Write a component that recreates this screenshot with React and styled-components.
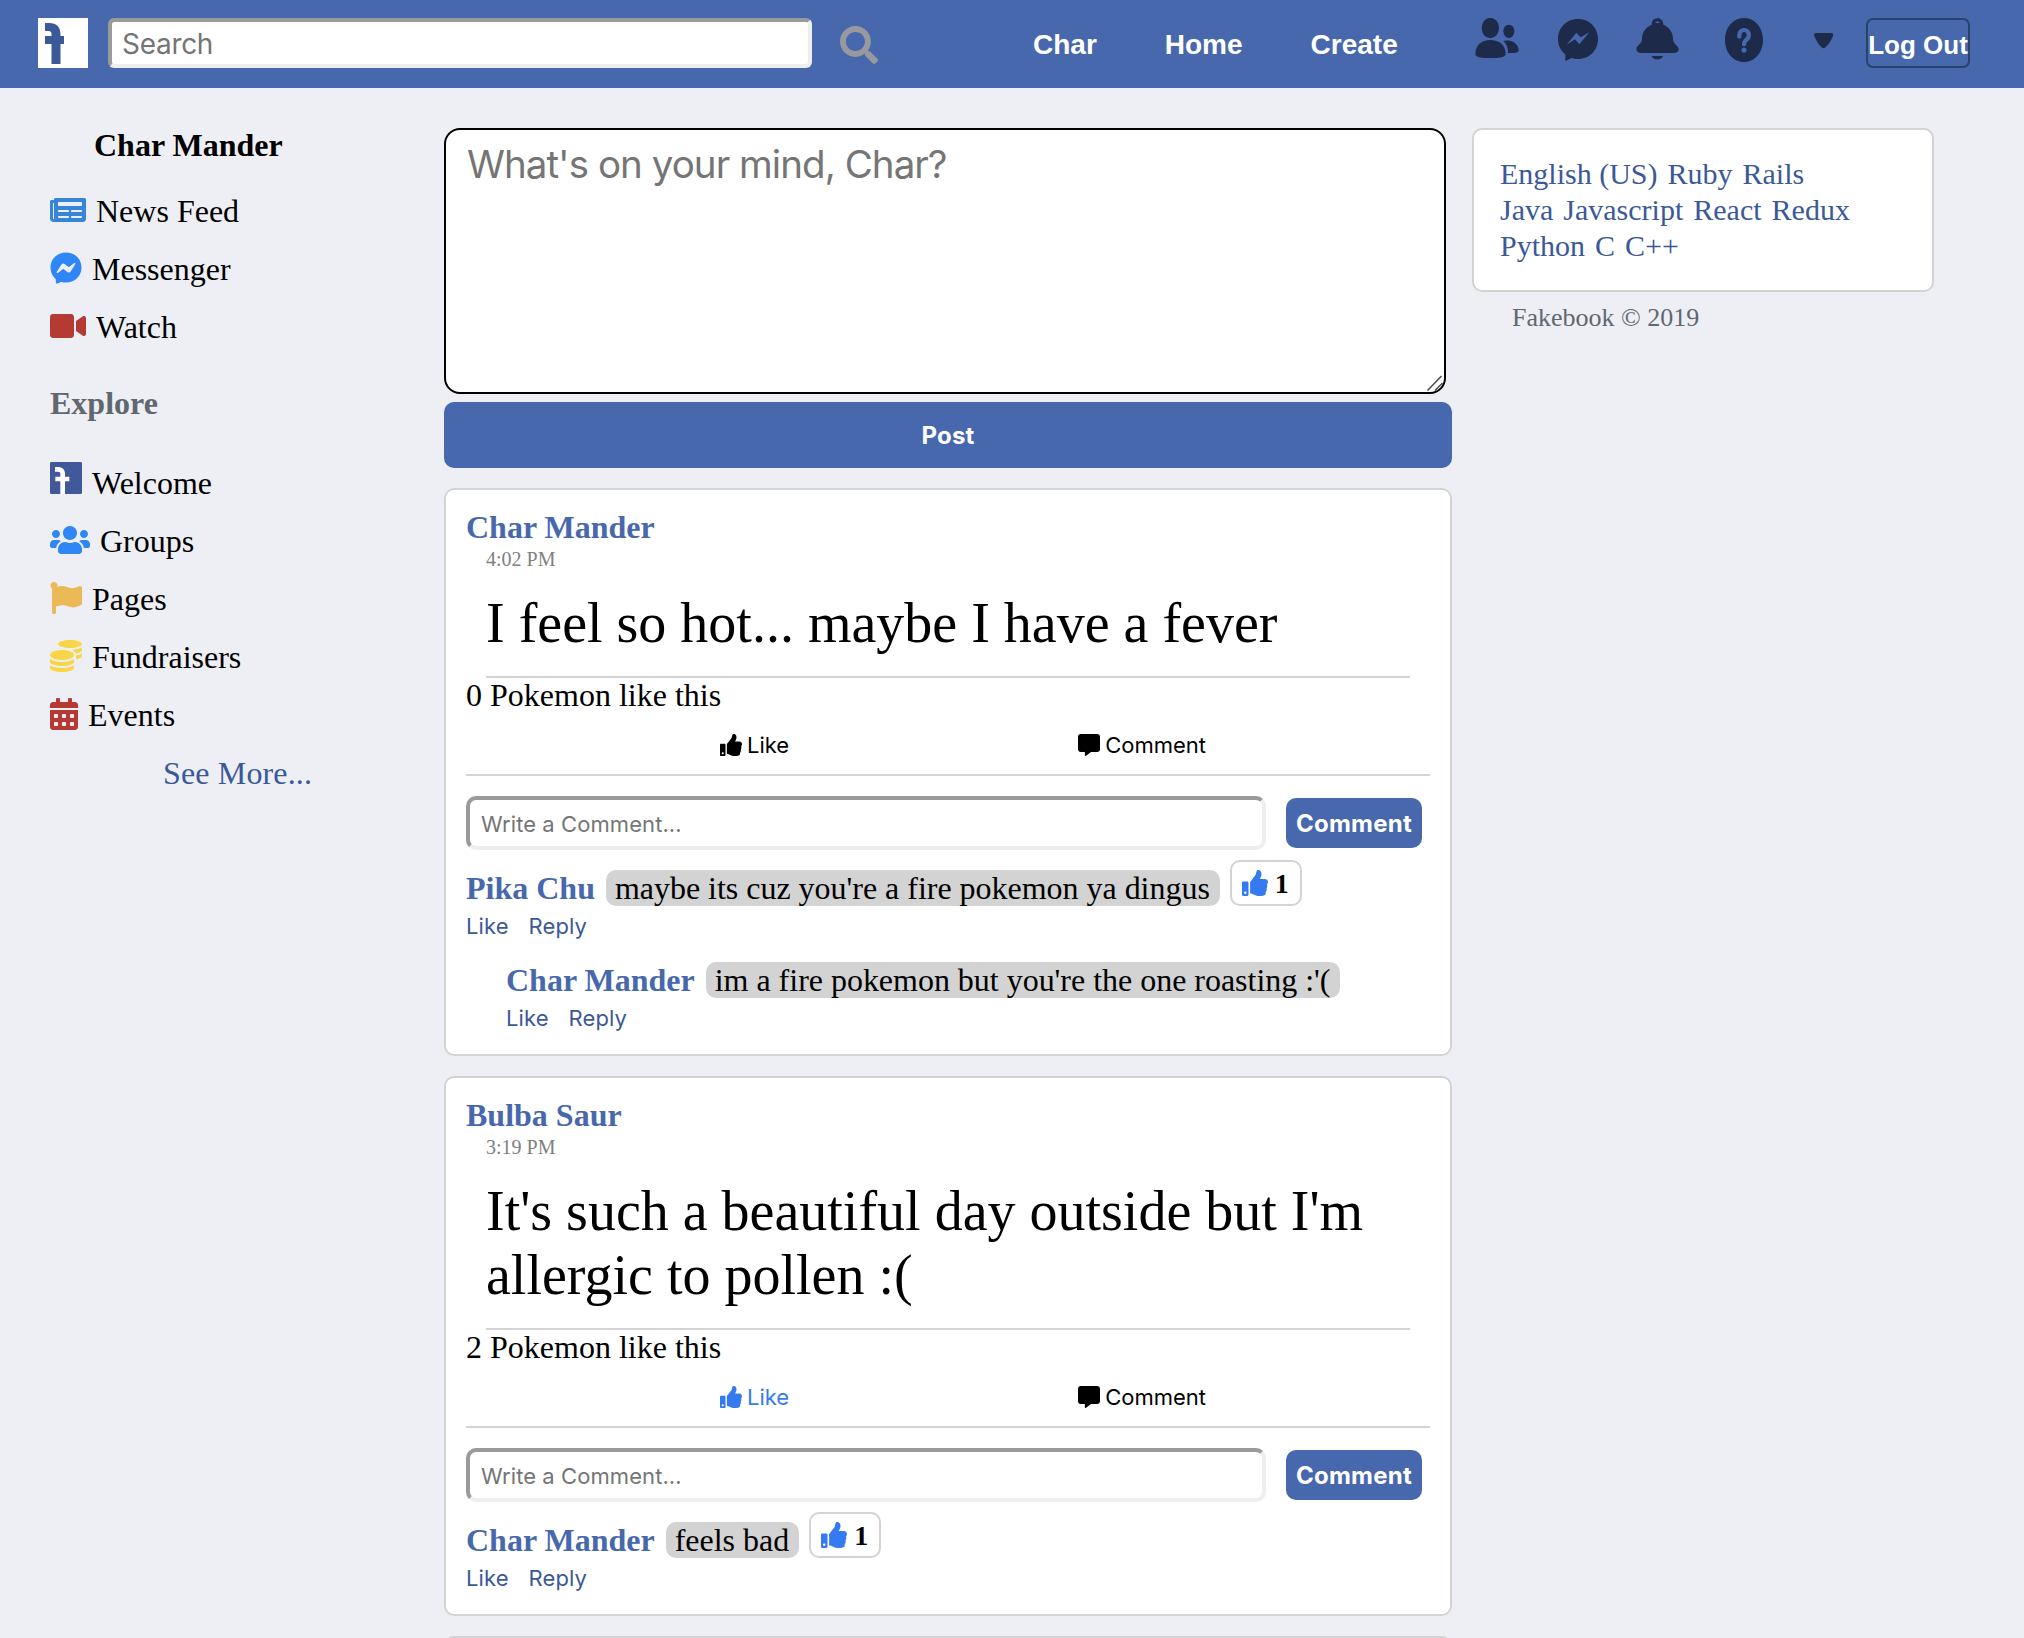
import React from "react";
import styled, { createGlobalStyle, css } from "styled-components";
import {
  FaCalendarAlt,
  FaCoins,
  FaCommentAlt,
  FaFacebookMessenger,
  FaFlag,
  FaNewspaper,
  FaSearch,
  FaThumbsUp,
  FaUsers,
  FaVideo,
} from "react-icons/fa";

const blue = "#4768ad";
const link = "#3b5998";
const line = "#d3d3d3";
const muted = "#606770";
const ui = `Inter, "Liberation Sans", sans-serif`;

const GlobalStyle = createGlobalStyle`
  *, *::before, *::after { box-sizing: border-box; }
  html, body { margin: 0; padding: 0; }
  body {
    height: 1638px;
    overflow: hidden;
    background: #eeeff5;
    color: #000;
    font-family: "Liberation Serif", serif;
    font-size: 32px;
    line-height: 36px;
  }
  ul { list-style: none; margin: 0; padding: 0; }
  button { font: inherit; cursor: pointer; }
  svg { display: block; flex: none; }
`;

/* ---------- header ---------- */

const Header = styled.header`
  display: flex;
  align-items: flex-start;
  height: 88px;
  padding: 18px 54px 0 38px;
  background: ${blue};
`;

const insetField = css`
  border: 4px solid;
  border-color: #9a9a9a #eeeeee #eeeeee #9a9a9a;
  background: #fff;
  font-family: ${ui};
  outline: none;
  &::placeholder {
    color: #757575;
    opacity: 1;
  }
`;

const SearchInput = styled.input`
  ${insetField}
  width: 704px;
  height: 50px;
  margin-left: 20px;
  padding: 2px 10px 0 10px;
  border-radius: 6px;
  font-size: 28px;
  letter-spacing: -0.3px;
`;

const SearchButton = styled.span`
  margin: 8px 0 0 28px;
  color: #97999f;
  font-size: 38px;
`;

const Nav = styled.nav`
  display: flex;
  gap: 68px;
  width: 442px;
  margin: 11px 0 0 155px;
`;

const NavLink = styled.a`
  color: #fff;
  font: bold 28px/32px "Liberation Sans", Arial, sans-serif;
`;

const HeaderIcons = styled.div`
  display: flex;
  align-items: flex-start;
  width: 359px;
  height: 50px;
  color: #1d2a49;
`;

const IconSlot = styled.span`
  padding-top: ${(p) => p.$top || 0}px;
  margin-left: ${(p) => p.$gap || 0}px;
`;

const LogOut = styled.button`
  width: 104px;
  height: 50px;
  margin-left: 32px;
  padding: 4px 0 0;
  border: 2px solid #27456b;
  border-radius: 7px;
  background: transparent;
  color: #fff;
  font: bold 26px/30px "Liberation Sans", Arial, sans-serif;
  white-space: nowrap;
`;

/* Each header glyph is drawn on a grid three times its size on screen. */
const Glyph = ({ box, children }) => {
  const [, , w, h] = box;
  return (
    <svg width={w / 3} height={h / 3} viewBox={box.join(" ")} fill="currentColor">
      {children}
    </svg>
  );
};

const FriendsIcon = () => (
  <Glyph box={[30, 36, 132, 120]}>
    <ellipse cx="76" cy="66" rx="26" ry="30.5" />
    <ellipse cx="131.5" cy="76" rx="16.5" ry="20" />
    <path d="M31 143C32 117 50 102 76 102s45 15 46 41c0 10-14 13-46 13s-45-3-45-13z" />
    <path d="M115 105c8-2.500 22-3 32 4 9 6 14 15 14 24 0 6-5 8.500-32 8.500 1-15-4-27-14-36.500z" />
  </Glyph>
);

const MessengerIcon = () => (
  <Glyph box={[279, 39, 120, 126]}>
    <path
      fillRule="evenodd"
      d="M339 39c34 0 60 26 60 60s-26 60-60 60c-7 0-13-1-19-3l-19 9v-20c-14-11-22-27-22-46 0-34 26-60 60-60zM305 116l29-36 13 14 26-15-30 36-13-15z"
    />
  </Glyph>
);

const BellIcon = () => (
  <Glyph box={[513, 36, 129, 126]}>
    <path
      fillRule="evenodd"
      d="M560 56c0-12 7-19 17.500-19S595 44 595 56c17 8 29 21 29 43 0 16 17 20 17 31 0 8-6 11-15 11h-97c-9 0-15-4-15-12 0-10 17-15 17-30 0-22 12-35 29-43zM571 51h13c-1-6-12-6-13 0z"
    />
    <path d="M560 150h34c-3 14-31 14-34 0z" />
  </Glyph>
);

const HelpIcon = () => (
  <Glyph box={[780, 36, 114, 132]}>
    <path
      fillRule="evenodd"
      d="M837 36c33 0 57 29 57 66s-24 66-57 66-57-29-57-66 24-66 57-66zM817 95c-2-18 7-29 20-29 12 0 21 9 21 21 0 19-15 17-15 30 0 4-12 4-12 0-1-19 14-19 14-30 0-6-3-9-8-9-6 0-8 6-8 17 0 3-12 3-12 0zM837 124.500a7.800 8 0 1 0 .01 0z"
    />
  </Glyph>
);

const CaretIcon = () => (
  <Glyph box={[1048, 82, 58, 46]}>
    <path d="M1054 82h46c5 0 7 4 5 9-4 12-14 26-24 35-3 2-6 2-9 0-10-9-19-23-23-35-2-5 0-9 5-9z" />
  </Glyph>
);

/* Square badge with the reversed "f" mark. */
const markPath =
  "M15 15h7c15 0 23 7 23 21v8h13v14H45v38H31V58H16V44h15v-8c0-5-2-7-7-7h-9z";

const HeaderLogo = () => (
  <svg width="50" height="50" viewBox="0 0 50 50">
    <rect width="50" height="50" fill="#fff" />
    <path
      fill={link}
      d="M7 5h4c8 0 11.500 4 11.500 12v1H26v8h-3.500v20h-9V26H7v-8h6.500v-2c0-2-1-3-3-3H7z"
    />
  </svg>
);

const WelcomeMark = styled.svg`
  && {
    display: inline-block;
    vertical-align: 0;
    margin: -4px 10px 0 0;
  }
`;

/* ---------- page columns ---------- */

const Columns = styled.div`
  display: flex;
  align-items: flex-start;
`;

const Sidebar = styled.aside`
  width: 444px;
  padding: 39px 0 0 50px;
`;

const ProfileName = styled.div`
  padding-left: 44px;
  margin-bottom: 30px;
  font-weight: bold;
`;

const Menu = styled.ul`
  display: flex;
  flex-direction: column;
  gap: 22px;
`;

const MenuItem = styled.li`
  height: 36px;
  white-space: nowrap;
  color: #000;
`;

const MenuIcon = styled.span`
  color: ${(p) => p.$color};
  svg {
    display: inline-block;
    width: ${(p) => p.$width}px;
    height: 32px;
    vertical-align: -4px;
    margin-right: 10px;
  }
`;

const SectionTitle = styled.div`
  margin: 40px 0 44px;
  color: ${muted};
  font-weight: bold;
`;

const SeeMore = styled.a`
  display: block;
  margin: 22px 0 0 113px;
  color: ${link};
  letter-spacing: 0.15px;
`;

const Feed = styled.main`
  width: 1008px;
  padding-top: 40px;
`;

const Composer = styled.div`
  position: relative;
  width: 1002px;
  height: 266px;
`;

const ComposerInput = styled.textarea`
  display: block;
  width: 100%;
  height: 100%;
  padding: 10px 20px 10px 21px;
  border: 2px solid #000;
  border-radius: 16px;
  background: #fff;
  outline: none;
  resize: none;
  font: 38.5px/48px ${ui};
  letter-spacing: -0.95px;
  &::placeholder {
    color: #757575;
    opacity: 1;
  }
`;

const Grip = styled.svg`
  position: absolute;
  right: 2px;
  bottom: 2px;
`;

const PostButton = styled.button`
  display: block;
  width: 100%;
  height: 66px;
  margin: 8px 0 20px;
  padding: 2px 0 0;
  border: 0;
  border-radius: 10px;
  background: ${blue};
  color: #fff;
  font: bold 24px/30px ${ui};
  letter-spacing: 0.2px;
`;

const Card = styled.article`
  margin-bottom: 20px;
  padding: 19px 20px 22px;
  border: 2px solid ${line};
  border-radius: 10px;
  background: #fff;
`;

const Author = styled.a`
  color: ${blue};
  font-weight: bold;
`;

const PostAuthor = styled(Author)`
  display: block;
`;

const Time = styled.div`
  margin: 2px 0 0 20px;
  color: #808080;
  font-size: 20px;
  line-height: 24px;
`;

const PostBody = styled.p`
  margin: 20px 20px 0;
  padding-bottom: 21px;
  width: 924px;
  border-bottom: 2px solid ${line};
  font-size: 56px;
  line-height: 64px;
`;

const LikeCount = styled.div`
  margin-top: -1px;
`;

const Actions = styled.div`
  display: flex;
  gap: 289px;
  height: 63px;
  width: 964px;
  padding: 19px 0 0 254px;
  border-bottom: 2px solid ${line};
`;

const Action = styled.button`
  display: flex;
  align-items: flex-start;
  gap: 5px;
  height: 26px;
  padding: 0;
  border: 0;
  background: none;
  color: ${(p) => (p.$active ? "#357af0" : "#000")};
  font: 22px/26px ${ui};
  svg {
    width: 22px;
    height: 22px;
    margin-top: 2px;
  }
`;

const CommentForm = styled.form`
  display: flex;
  align-items: center;
  gap: 20px;
  margin-top: 20px;
`;

const CommentInput = styled.input`
  ${insetField}
  width: 800px;
  height: 54px;
  padding: 2px 10px 0 11px;
  border-radius: 10px;
  font-size: 22px;
  letter-spacing: 0.08px;
`;

const CommentButton = styled.button`
  width: 136px;
  height: 50px;
  padding: 1px 0 0;
  border: 0;
  border-radius: 10px;
  background: ${blue};
  color: #fff;
  font: bold 24px/30px ${ui};
  letter-spacing: 0.25px;
`;

const Comment = styled.div`
  margin: ${(p) => (p.$nested ? "22px 0 0 40px" : "10px 0 0")};
`;

const CommentLine = styled.div`
  display: flex;
  align-items: flex-end;
  height: ${(p) => (p.$nested ? 36 : 46)}px;
  white-space: nowrap;
`;

const Bubble = styled.span`
  height: 36px;
  margin-left: 11px;
  padding: 0 10px 0 9px;
  border-radius: 10px;
  background: ${line};
  letter-spacing: -0.02px;
`;

const LikeBadge = styled.span`
  display: flex;
  align-items: flex-start;
  width: 72px;
  height: 46px;
  margin-left: 10px;
  padding: 8px 0 0 10px;
  border: 2px solid ${line};
  border-radius: 10px;
  background: #fff;
  font-weight: bold;
  font-size: 28px;
  line-height: 28px;
  svg {
    width: 26px;
    height: 26px;
    margin-right: 7px;
    color: #357af0;
  }
`;

const CommentLinks = styled.div`
  display: flex;
  gap: 20px;
  margin: 7px 0 0;
  color: ${link};
  font: 22px/27px ${ui};
  letter-spacing: 0.1px;
`;

const Right = styled.aside`
  width: 462px;
  margin-left: 20px;
  padding-top: 40px;
`;

const Languages = styled.div`
  height: 164px;
  padding: 26px 0 0 26px;
  border: 2px solid ${line};
  border-radius: 10px;
  background: #fff;
`;

const LanguageRow = styled.div`
  display: flex;
  gap: 10px;
  color: ${link};
  font-size: 30px;
  line-height: 36px;
`;

const Copyright = styled.div`
  margin: 11px 0 0 40px;
  color: ${muted};
  font-size: 26px;
  line-height: 30px;
`;

const shortcuts = [
  { label: "News Feed", Icon: FaNewspaper, color: "#3685d8", width: 36 },
  { label: "Messenger", Icon: FaFacebookMessenger, color: "#2f86f7", width: 32 },
  { label: "Watch", Icon: FaVideo, color: "#b43a33", width: 36 },
];

const explore = [
  { label: "Groups", Icon: FaUsers, color: "#2f86f7", width: 40 },
  { label: "Pages", Icon: FaFlag, color: "#ecb957", width: 32 },
  { label: "Fundraisers", Icon: FaCoins, color: "#f9d648", width: 32 },
  { label: "Events", Icon: FaCalendarAlt, color: "#b43a33", width: 28 },
];

const languages = [
  ["English (US)", "Ruby", "Rails"],
  ["Java", "Javascript", "React", "Redux"],
  ["Python", "C", "C++"],
];

const posts = [
  {
    author: "Char Mander",
    time: "4:02 PM",
    body: "I feel so hot... maybe I have a fever",
    likes: 0,
    comments: [
      { author: "Pika Chu", text: "maybe its cuz you're a fire pokemon ya dingus", likes: 1 },
      { author: "Char Mander", text: "im a fire pokemon but you're the one roasting :'(", nested: true },
    ],
  },
  {
    author: "Bulba Saur",
    time: "3:19 PM",
    body: "It's such a beautiful day outside but I'm allergic to pollen :(",
    likes: 2,
    liked: true,
    comments: [{ author: "Char Mander", text: "feels bad", likes: 1 }],
  },
];

const Entry = ({ label, Icon, color, width }) => (
  <MenuItem>
    <MenuIcon $color={color} $width={width}>
      <Icon />
    </MenuIcon>
    {label}
  </MenuItem>
);

const Post = ({ post }) => (
  <Card>
    <PostAuthor>{post.author}</PostAuthor>
    <Time>{post.time}</Time>
    <PostBody>{post.body}</PostBody>
    <LikeCount>{post.likes} Pokemon like this</LikeCount>
    <Actions>
      <Action $active={post.liked}>
        <FaThumbsUp />
        Like
      </Action>
      <Action>
        <FaCommentAlt />
        Comment
      </Action>
    </Actions>
    <CommentForm>
      <CommentInput placeholder="Write a Comment..." />
      <CommentButton type="button">Comment</CommentButton>
    </CommentForm>
    {post.comments.map((c) => (
      <Comment key={c.text} $nested={c.nested}>
        <CommentLine $nested={c.nested}>
          <Author>{c.author}</Author>
          <Bubble>{c.text}</Bubble>
          {c.likes && (
            <LikeBadge>
              <FaThumbsUp />
              {c.likes}
            </LikeBadge>
          )}
        </CommentLine>
        <CommentLinks>
          <span>Like</span>
          <span>Reply</span>
        </CommentLinks>
      </Comment>
    ))}
  </Card>
);

export default function App() {
  return (
    <>
      <GlobalStyle />
      <Header>
        <HeaderLogo />
        <SearchInput placeholder="Search" />
        <SearchButton>
          <FaSearch />
        </SearchButton>
        <Nav>
          <NavLink>Char</NavLink>
          <NavLink>Home</NavLink>
          <NavLink>Create</NavLink>
        </Nav>
        <HeaderIcons>
          <IconSlot><FriendsIcon /></IconSlot>
          <IconSlot $gap={39} $top={1}><MessengerIcon /></IconSlot>
          <IconSlot $gap={38}><BellIcon /></IconSlot>
          <IconSlot $gap={46}><HelpIcon /></IconSlot>
          <IconSlot $gap={51.3} $top={15.3}><CaretIcon /></IconSlot>
        </HeaderIcons>
        <LogOut>Log Out</LogOut>
      </Header>
      <Columns>
        <Sidebar>
          <ProfileName>Char Mander</ProfileName>
          <Menu>
            {shortcuts.map((s) => (
              <Entry key={s.label} {...s} />
            ))}
          </Menu>
          <SectionTitle>Explore</SectionTitle>
          <Menu>
            <MenuItem>
              <WelcomeMark width="32" height="32" viewBox="0 0 96 96">
                <rect width="96" height="96" rx="4" fill="#41589b" />
                <path d={markPath} fill="#fff" />
              </WelcomeMark>
              Welcome
            </MenuItem>
            {explore.map((s) => (
              <Entry key={s.label} {...s} />
            ))}
          </Menu>
          <SeeMore>See More...</SeeMore>
        </Sidebar>
        <Feed>
          <Composer>
            <ComposerInput placeholder="What's on your mind, Char?" />
            <Grip width="18" height="18" viewBox="0 0 18 18" stroke="#4a4a4a" strokeWidth="1.500" fill="none">
              <path d="M1.500 16.500L15.500 2M9 16.500L16.500 9" />
            </Grip>
          </Composer>
          <PostButton>Post</PostButton>
          {posts.map((p) => (
            <Post key={p.time} post={p} />
          ))}
          <Card />
        </Feed>
        <Right>
          <Languages>
            {languages.map((row) => (
              <LanguageRow key={row[0]}>
                {row.map((name) => (
                  <span key={name}>{name}</span>
                ))}
              </LanguageRow>
            ))}
          </Languages>
          <Copyright>Fakebook © 2019</Copyright>
        </Right>
      </Columns>
    </>
  );
}
